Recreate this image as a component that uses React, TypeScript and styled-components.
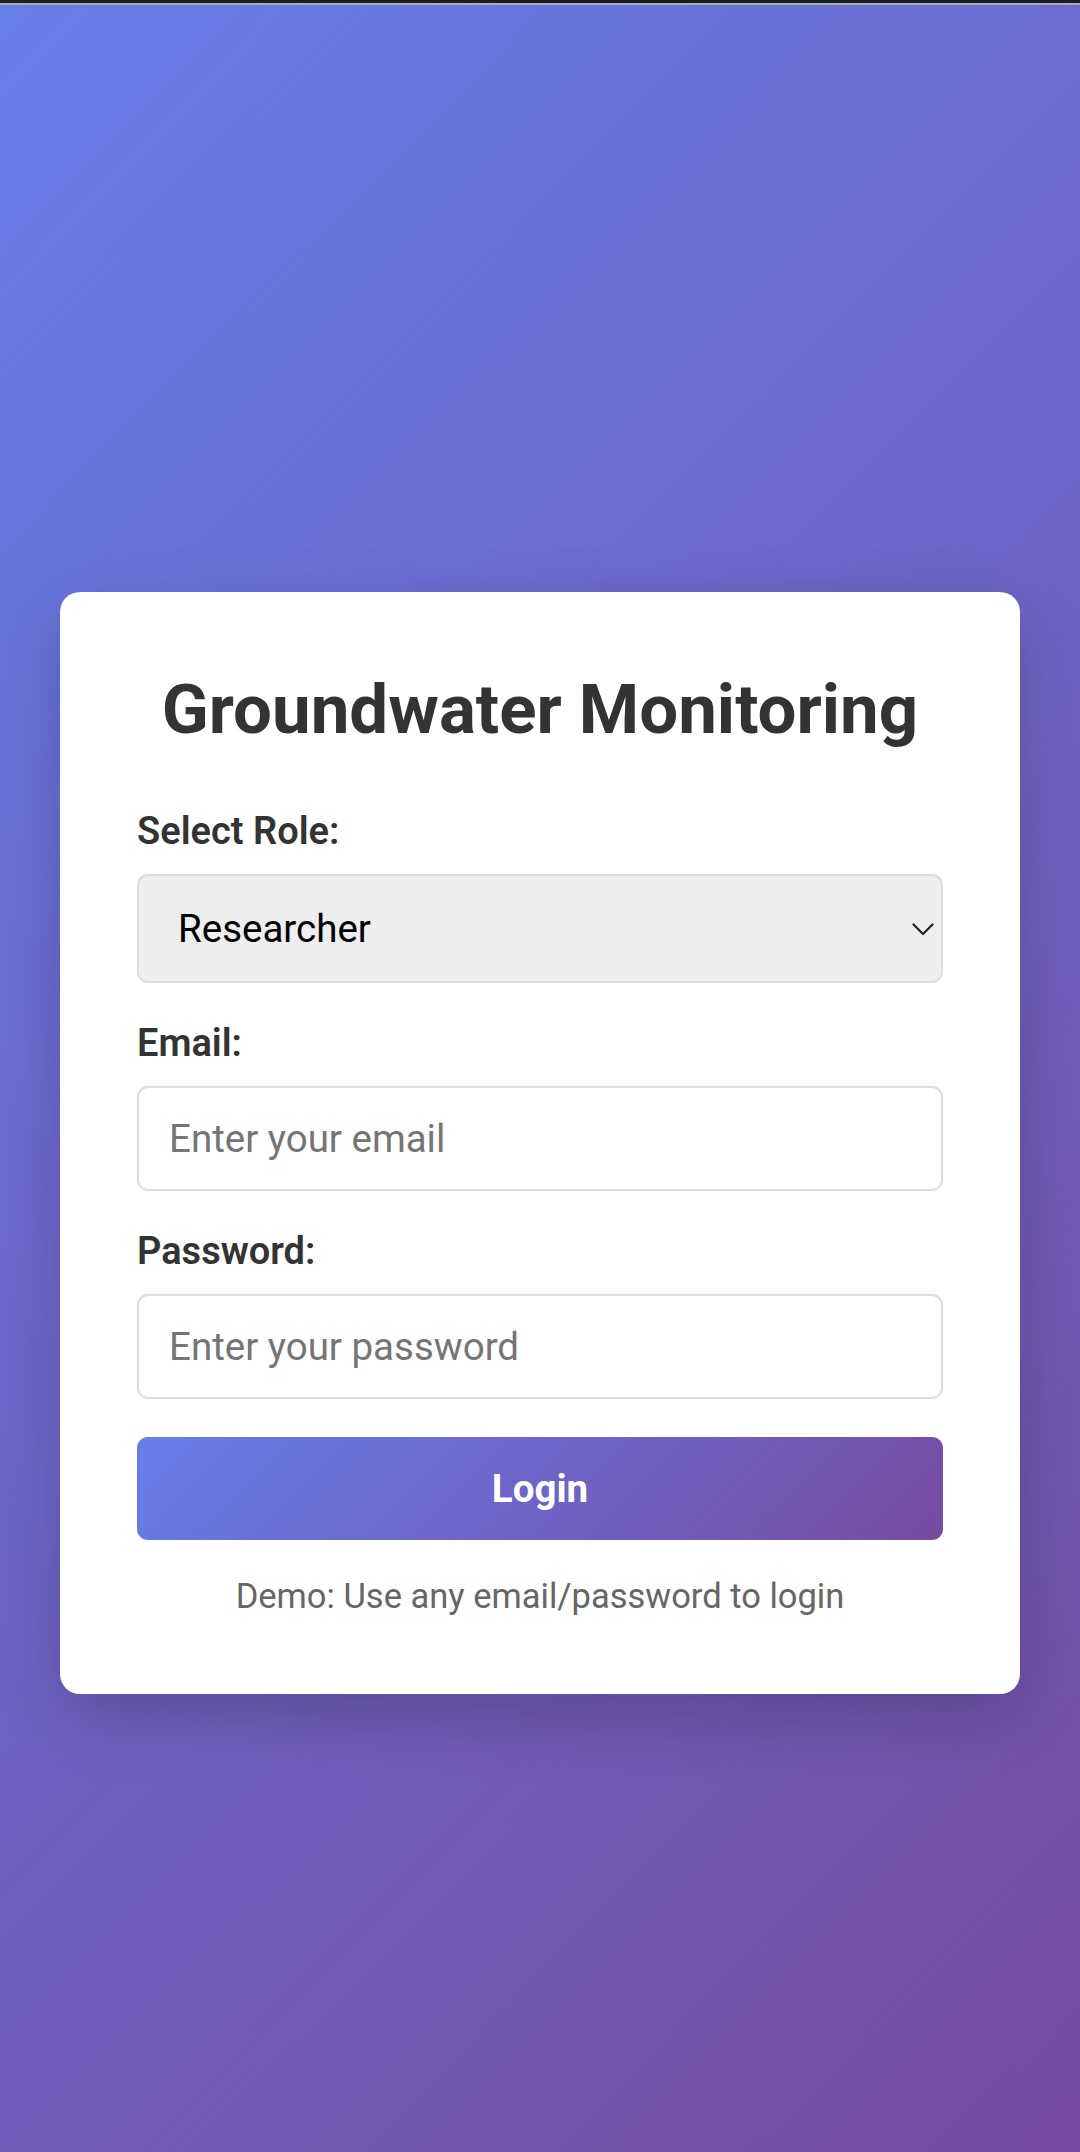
import styled, { createGlobalStyle } from "styled-components";

const GlobalStyle = createGlobalStyle`
  * {
    box-sizing: border-box;
  }
  body {
    margin: 0;
    font-family: Roboto, "Noto Sans", sans-serif;
    background: #667eea;
  }
`

function App() {
    return (
        <>
            <GlobalStyle/>
            <TopEdge/>
            <Page>
                <Card>
                    <Title>Groundwater Monitoring</Title>
                    <form onSubmit={(e) => e.preventDefault()}>
                        <Group>
                            <Label htmlFor="role">Select Role:</Label>
                            <SelectWrap>
                                <Select id="role" defaultValue="researcher">
                                    <option value="researcher">Researcher</option>
                                    <option value="officer">Field Officer</option>
                                    <option value="admin">Administrator</option>
                                </Select>
                                <Chevron width="22" height="13" viewBox="0 0 22 13" fill="none">
                                    <path d="M1.5 1.5 L11 11 L20.5 1.5" stroke="#222" strokeWidth="2.2"
                                          strokeLinecap="round" strokeLinejoin="round"/>
                                </Chevron>
                            </SelectWrap>
                        </Group>
                        <Group>
                            <Label htmlFor="email">Email:</Label>
                            <Input id="email" type="email" placeholder="Enter your email"/>
                        </Group>
                        <Group>
                            <Label htmlFor="password">Password:</Label>
                            <Input id="password" type="password" placeholder="Enter your password"/>
                        </Group>
                        <LoginButton type="submit">Login</LoginButton>
                    </form>
                    <Hint>Demo: Use any email/password to login</Hint>
                </Card>
            </Page>
        </>
    )
}

const TopEdge = styled.div`
    height: 5px;
    border-top: 3px solid #1b1e21;
    background: #a9acb4;
`

const Page = styled.main`
    min-height: 2147px;
    display: flex;
    flex-direction: column;
    align-items: center;
    padding-top: 587px;
    background: linear-gradient(135deg, #667eea 0%, #764ba2 100%);
`

const Card = styled.section`
    width: 960px;
    padding: 77px 77px 78px;
    background: #ffffff;
    border-radius: 20px;
    box-shadow: 0 22px 68px rgba(0, 0, 0, 0.2);
`

const Title = styled.h1`
    margin: 0 0 59px;
    font-size: 69px;
    font-weight: 700;
    color: #333333;
    text-align: center;
`

const Group = styled.div`
    margin-bottom: 38px;
`

const Label = styled.label`
    display: block;
    margin-bottom: 21px;
    font-size: 38px;
    font-weight: 600;
    color: #333333;
`

const SelectWrap = styled.div`
    position: relative;
`

const Select = styled.select`
    display: block;
    width: 100%;
    height: 109px;
    padding: 0 60px 0 39px;
    font-family: inherit;
    font-size: 38.5px;
    color: #000000;
    background: #eeeeee;
    border: 2px solid #dddddd;
    border-radius: 11px;
    appearance: none;
    outline: none;
`

const Chevron = styled.svg`
    position: absolute;
    right: 9px;
    top: 49px;
    pointer-events: none;
`

const Input = styled.input`
    display: block;
    width: 100%;
    height: 105px;
    padding: 0 30px;
    font-family: inherit;
    font-size: 38.5px;
    color: #222222;
    background: #ffffff;
    border: 2px solid #dddddd;
    border-radius: 11px;
    outline: none;

    &::placeholder {
        color: #757575;
    }
`

const LoginButton = styled.button`
    display: block;
    width: 100%;
    height: 103px;
    margin-top: 9px;
    font-family: inherit;
    font-size: 38.5px;
    font-weight: 700;
    color: #ffffff;
    border: none;
    border-radius: 11px;
    background: linear-gradient(135deg, #667eea 0%, #764ba2 100%);
    cursor: pointer;
`

const Hint = styled.p`
    margin: 36px 0 0;
    font-size: 34.5px;
    color: #666666;
    text-align: center;
`

export default App
